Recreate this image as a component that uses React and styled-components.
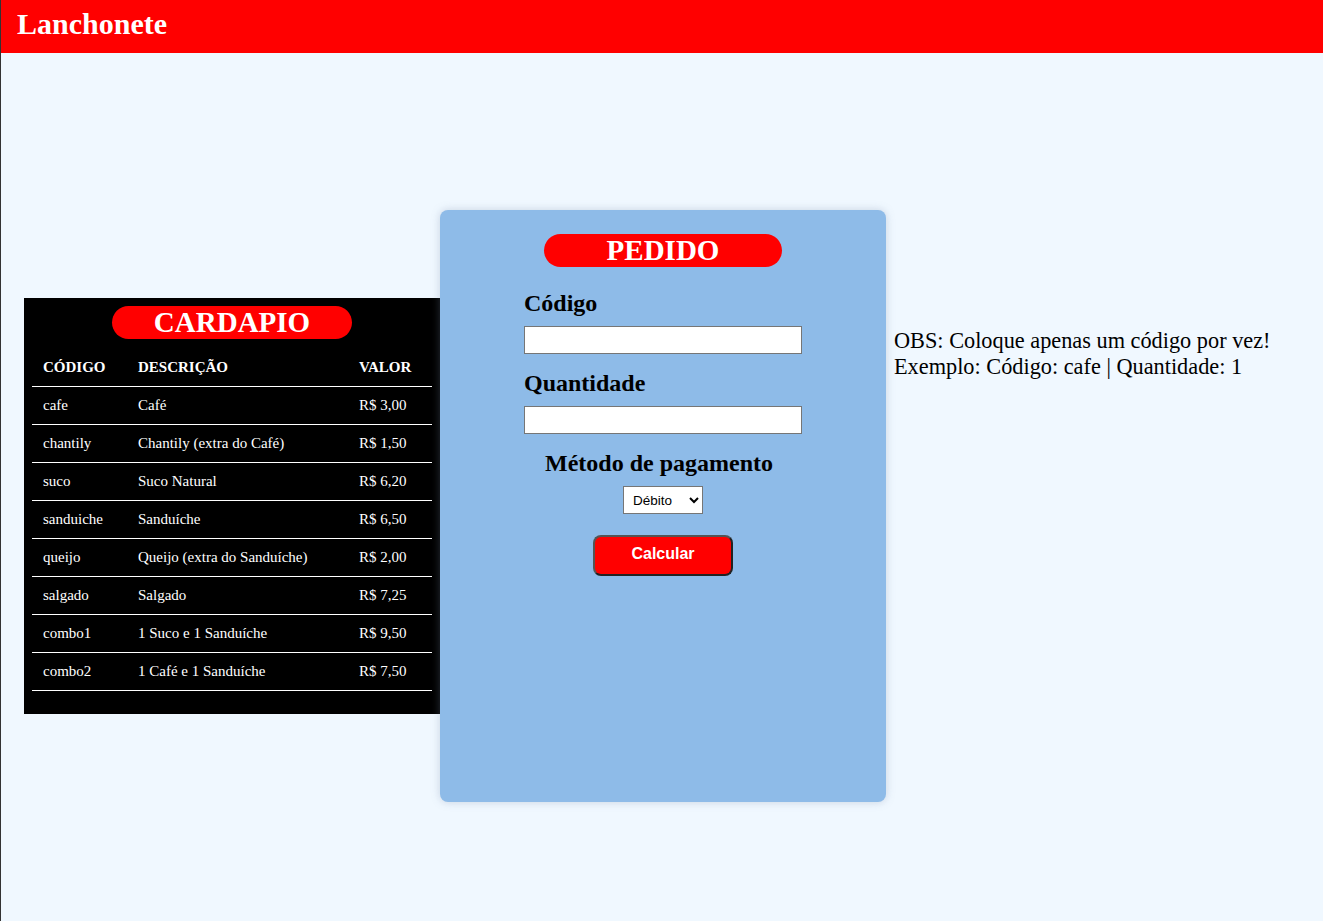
import styled, { createGlobalStyle } from 'styled-components'

const GlobalStyle = createGlobalStyle`
  html, body {
    margin: 0;
    padding: 0;
  }
  body {
    background-color: aliceblue;
    font-family: "Liberation Serif", "Times New Roman", serif;
    border-left: 1px solid #333;
    min-height: 921px;
    box-sizing: border-box;
  }
`;

const Header = styled.header`
  background-color: red;
  height: 53px;
  padding-left: 16px;
  display: flex;
  align-items: center;
`;

const Logo = styled.h1`
  margin: 0;
  color: white;
  font-size: 30px;
  font-weight: bold;
  padding-bottom: 6px;
`;

const Main = styled.main`
  display: flex;
  align-items: flex-start;
  padding-left: 23px;
  padding-top: 157px;
`;

const Panels = styled.div`
  display: flex;
  align-items: center;
`;

const Cardapio = styled.section`
  background-color: black;
  width: 416px;
  padding: 8px 8px 23px;
  box-sizing: border-box;
  display: flex;
  flex-direction: column;
  align-items: center;
`;

const Pill = styled.h2`
  margin: 0;
  width: ${(props) => props.w}px;
  height: 33px;
  background-color: red;
  color: white;
  border-radius: 17px;
  font-size: 29px;
  font-weight: bold;
  display: flex;
  align-items: center;
  justify-content: center;
`;

const Table = styled.table`
  width: 400px;
  border-collapse: collapse;
  color: white;
  margin-top: 9px;
  font-size: 15px;
  table-layout: fixed;
`;

const Th = styled.th`
  text-align: left;
  font-weight: bold;
  height: 38px;
  padding: 0 0 0 11px;
  border-bottom: 1px solid white;
  width: ${(props) => props.w}px;
`;

const Td = styled.td`
  height: 37px;
  padding: 0 0 0 11px;
  border-bottom: 1px solid white;
  white-space: nowrap;
`;

const Pedido = styled.section`
  background-color: #8ebbe8;
  width: 446px;
  height: 592px;
  border-radius: 8px;
  box-shadow: 0 0 8px rgba(120, 140, 170, 0.35);
  box-sizing: border-box;
  padding-top: 24px;
  display: flex;
  flex-direction: column;
  align-items: center;
`;

const Form = styled.div`
  width: 278px;
  margin-top: 22px;
  display: flex;
  flex-direction: column;
`;

const Label = styled.label`
  font-size: 24px;
  font-weight: bold;
  color: black;
  line-height: 28px;
  margin-bottom: 9px;
  white-space: nowrap;
  text-align: ${(props) => (props.center ? 'center' : 'left')};
  margin-right: ${(props) => (props.center ? '8px' : '0')};
`;

const Input = styled.input`
  width: 278px;
  height: 28px;
  box-sizing: border-box;
  border: 1px solid #767676;
  background: white;
  margin: 0 0 15px;
`;

const Select = styled.select`
  align-self: center;
  width: 80px;
  height: 28px;
  padding-left: 5px;
  font-family: "Liberation Sans", Arial, sans-serif;
  font-size: 13.5px;
  border: 1px solid #767676;
  background: white;
  margin-bottom: 21px;
`;

const Button = styled.button`
  align-self: center;
  width: 140px;
  height: 41px;
  background-color: red;
  color: white;
  font-family: "Liberation Sans", Arial, sans-serif;
  font-weight: bold;
  font-size: 16px;
  border: 2px solid #222;
  border-top-color: #555;
  border-left-color: #555;
  border-radius: 8px;
  padding-bottom: 4px;
`;

const Obs = styled.p`
  margin: 118px 0 0 8px;
  font-size: 22.3px;
  line-height: 26px;
  color: black;
`;

const itens = [
  ['cafe', 'Café', 'R$ 3,00'],
  ['chantily', 'Chantily (extra do Café)', 'R$ 1,50'],
  ['suco', 'Suco Natural', 'R$ 6,20'],
  ['sanduiche', 'Sanduíche', 'R$ 6,50'],
  ['queijo', 'Queijo (extra do Sanduíche)', 'R$ 2,00'],
  ['salgado', 'Salgado', 'R$ 7,25'],
  ['combo1', '1 Suco e 1 Sanduíche', 'R$ 9,50'],
  ['combo2', '1 Café e 1 Sanduíche', 'R$ 7,50'],
];

const App = () => {
  return (
    <>
      <GlobalStyle />
      <Header>
        <Logo>Lanchonete</Logo>
      </Header>
      <Main>
        <Panels>
          <Cardapio>
            <Pill w={240}>CARDAPIO</Pill>
            <Table>
              <thead>
                <tr>
                  <Th w={84}>CÓDIGO</Th>
                  <Th w={210}>DESCRIÇÃO</Th>
                  <Th w={73}>VALOR</Th>
                </tr>
              </thead>
              <tbody>
                {itens.map(([cod, desc, valor]) => (
                  <tr key={cod}>
                    <Td>{cod}</Td>
                    <Td>{desc}</Td>
                    <Td>{valor}</Td>
                  </tr>
                ))}
              </tbody>
            </Table>
          </Cardapio>
          <Pedido>
            <Pill w={238}>PEDIDO</Pill>
            <Form>
              <Label htmlFor="codigo">Código</Label>
              <Input id="codigo" type="text" />
              <Label htmlFor="quantidade">Quantidade</Label>
              <Input id="quantidade" type="number" />
              <Label center htmlFor="pagamento">Método de pagamento</Label>
              <Select id="pagamento" defaultValue="debito">
                <option value="debito">Débito</option>
                <option value="credito">Crédito</option>
                <option value="dinheiro">Dinheiro</option>
              </Select>
              <Button>Calcular</Button>
            </Form>
          </Pedido>
        </Panels>
        <Obs>
          OBS: Coloque apenas um código por vez!
          <br />
          Exemplo: Código: cafe | Quantidade: 1
        </Obs>
      </Main>
    </>
  );
}

export default App;
